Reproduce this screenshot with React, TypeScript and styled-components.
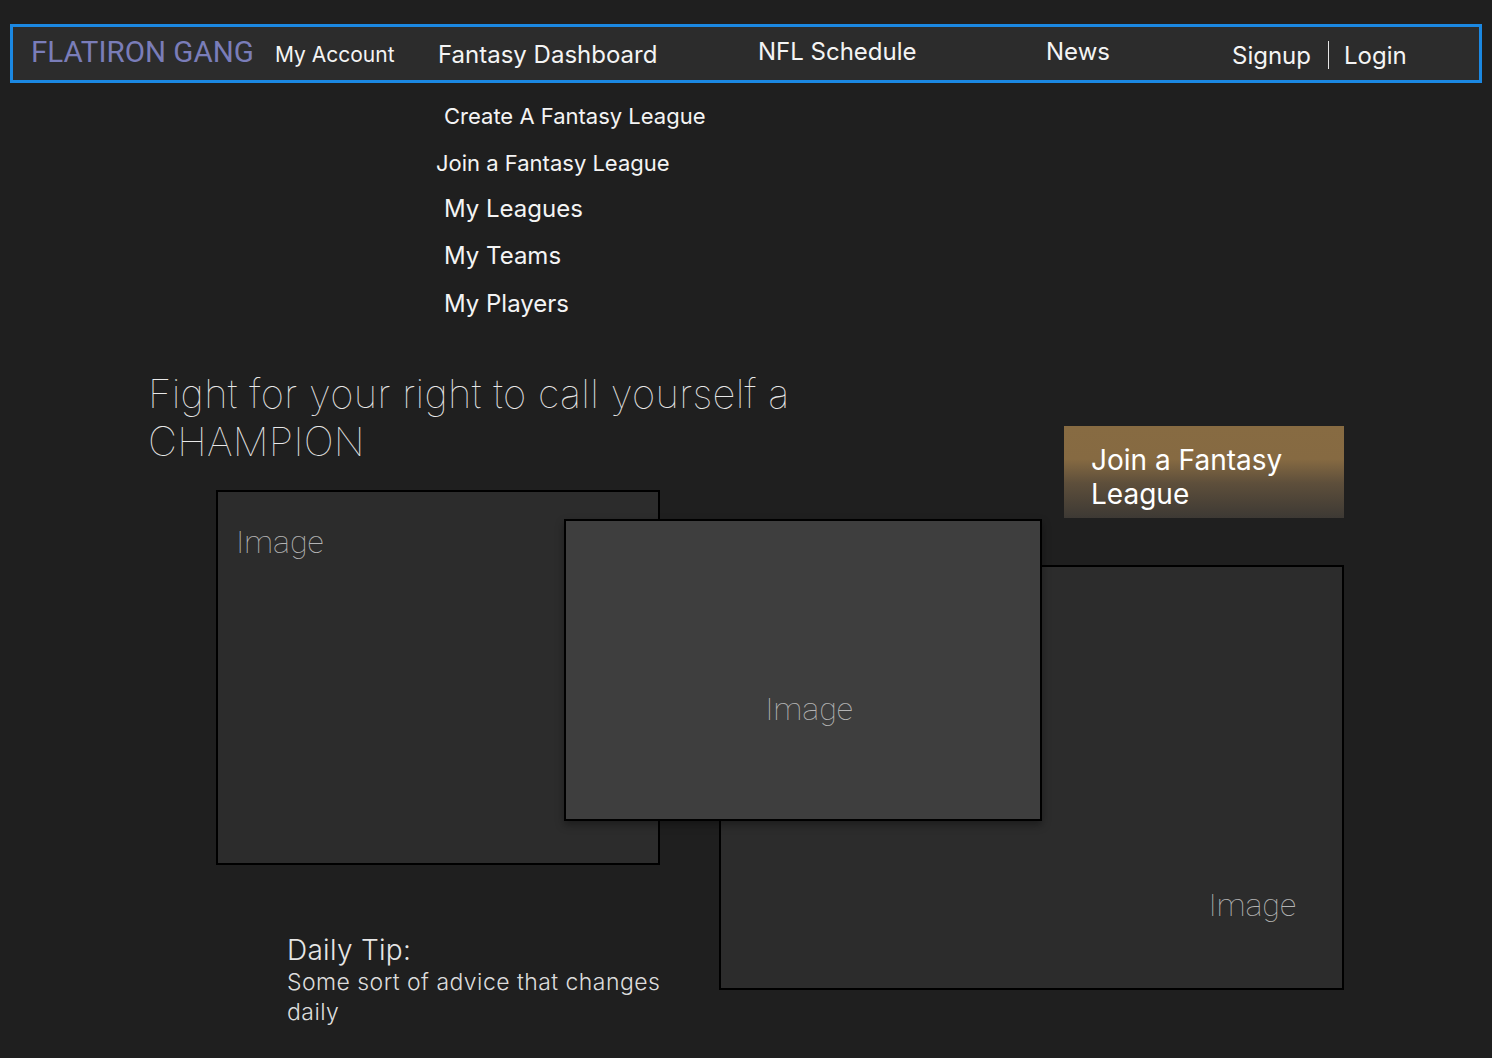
import React from "react";
import styled, { createGlobalStyle } from "styled-components";

const Global = createGlobalStyle`
  html, body { margin: 0; padding: 0; background: #1f1f1f; }
  body { font-family: Inter, "Noto Sans", sans-serif; color: #f2f2f2; width: 1492px; min-height: 1058px; overflow: hidden; }
  * { box-sizing: border-box; }
`;

const Page = styled.div`
  width: 1492px;
  height: 1058px;
  padding-top: 24px;
`;

const NavBar = styled.nav`
  margin: 0 10px;
  height: 59px;
  border: 3px solid #1b88e2;
  background: #2c2c2c;
  display: flex;
  align-items: flex-start;
`;

const Brand = styled.div`
  width: 262px;
  padding: 9.5px 0 0 18px;
  font-family: Roboto, "Liberation Sans", sans-serif;
  font-size: 29.5px;
  line-height: 30px;
  font-weight: 400;
  color: #7a7db9;
  white-space: nowrap;
`;

const NavItem = styled.a<{ $w?: number; $top: number; $size: number }>`
  ${(p) => (p.$w ? `width: ${p.$w}px;` : "")}
  padding-top: ${(p) => p.$top}px;
  font-size: ${(p) => p.$size}px;
  line-height: 30px;
  color: #f4f4f4;
  white-space: nowrap;
  text-decoration: none;
`;

const Divider = styled.span`
  margin: 14px 15px 0 17px;
  width: 0;
  height: 28px;
  border-left: 1.5px solid #e6e6e6;
`;

const Menu = styled.ul`
  list-style: none;
  margin: 9.5px 0 0 0;
  padding: 0;
  display: flex;
  flex-direction: column;
`;

const MenuItem = styled.li<{ $indent: number; $h: number; $size: number }>`
  padding-left: ${(p) => p.$indent}px;
  height: ${(p) => p.$h}px;
  line-height: ${(p) => p.$h}px;
  font-size: ${(p) => p.$size}px;
  color: #f4f4f4;
  white-space: nowrap;
`;

const Stage = styled.section`
  position: relative;
  margin-top: 42px;
  display: flex;
  align-items: flex-start;
`;

const LeftCol = styled.div`
  flex: 0 0 719px;
  min-width: 0;
  display: flex;
  flex-direction: column;
`;

const RightCol = styled.div`
  flex: 0 0 625px;
  min-width: 0;
  display: flex;
  flex-direction: column;
`;

const Headline = styled.h1`
  margin: 0 0 0 148px;
  width: 680px;
  flex-shrink: 0;
  font-size: 40px;
  line-height: 48px;
  font-weight: 100;
  color: #e8e8e8;
  letter-spacing: 0.3px;
`;

const CtaButton = styled.button`
  margin: 56.5px 0 0 345px;
  width: 280px;
  height: 92px;
  border: none;
  padding: 16.5px 0 0 27px;
  text-align: left;
  align-self: flex-start;
  background: linear-gradient(180deg, #876b42 0%, #866a42 36%, #5e4f3b 62%, #3d3934 100%);
  font-family: Inter, sans-serif;
  font-size: 28px;
  line-height: 34px;
  font-weight: 400;
  color: #ffffff;
  display: flex;
  flex-direction: column;
  cursor: pointer;
`;

const Card = styled.div<{ $w: number; $h: number; $tone: "dark" | "light"; $align: "start" | "center" | "end" }>`
  width: ${(p) => p.$w}px;
  height: ${(p) => p.$h}px;
  flex-shrink: 0;
  border: 2px solid #000;
  background: ${(p) => (p.$tone === "light" ? "#3e3e3e" : "#2c2c2c")};
  display: flex;
  justify-content: ${(p) => (p.$align === "start" ? "flex-start" : p.$align === "end" ? "flex-end" : "center")};
  align-items: flex-start;
`;

const CardOne = styled(Card)`
  margin: 24.5px 0 0 216px;
  padding: 30px 0 0 18px;
`;

const CardThree = styled(Card)`
  margin-top: 47px;
  padding: 317.5px 46px 0 0;
`;

const FloatingCard = styled(Card)`
  position: absolute;
  left: 564px;
  top: 149.5px;
  padding: 168px 0 0 12px;
  box-shadow: 0 4px 8px rgba(0, 0, 0, 0.35);
  z-index: 2;
`;

const CardLabel = styled.span`
  font-family: Roboto, "Liberation Sans", sans-serif;
  font-weight: 100;
  font-size: 32px;
  line-height: 40px;
  color: #b4b4b4;
`;

const Tip = styled.div`
  margin: 67.5px 0 0 287px;
  width: 400px;
  display: flex;
  flex-direction: column;
`;

const TipTitle = styled.h3`
  margin: 0;
  font-size: 28px;
  line-height: 34px;
  font-weight: 300;
  color: #e6e6e6;
  letter-spacing: 0.3px;
`;

const TipText = styled.p`
  margin: 0;
  font-size: 23px;
  line-height: 30px;
  font-weight: 300;
  color: #dcdcdc;
  letter-spacing: 0.45px;
`;

export default function App() {
  return (
    <Page>
      <Global />
      <NavBar>
        <Brand>FLATIRON GANG</Brand>
        <NavItem $w={163} $top={12.5} $size={21}>My Account</NavItem>
        <NavItem $w={320} $top={13} $size={24}>Fantasy Dashboard</NavItem>
        <NavItem $w={288} $top={10} $size={24}>NFL Schedule</NavItem>
        <NavItem $w={186} $top={10} $size={24}>News</NavItem>
        <NavItem $top={13.5} $size={24}>Signup</NavItem>
        <Divider />
        <NavItem $top={13.5} $size={24}>Login</NavItem>
      </NavBar>

      <Menu>
        <MenuItem $indent={444} $h={47} $size={22}>Create A Fantasy League</MenuItem>
        <MenuItem $indent={436} $h={46} $size={22}>Join a Fantasy League</MenuItem>
        <MenuItem $indent={444} $h={46} $size={24}>My Leagues</MenuItem>
        <MenuItem $indent={444} $h={48} $size={24}>My Teams</MenuItem>
        <MenuItem $indent={444} $h={48} $size={24}>My Players</MenuItem>
      </Menu>

      <Stage>
        <LeftCol>
          <Headline>Fight for your right to call yourself a CHAMPION</Headline>
          <CardOne $w={444} $h={375} $tone="dark" $align="start">
            <CardLabel>Image</CardLabel>
          </CardOne>
          <Tip>
            <TipTitle>Daily Tip:</TipTitle>
            <TipText>Some sort of advice that changes daily</TipText>
          </Tip>
        </LeftCol>
        <RightCol>
          <CtaButton>
            <span>Join a Fantasy</span>
            <span>League</span>
          </CtaButton>
          <CardThree $w={625} $h={425} $tone="dark" $align="end">
            <CardLabel>Image</CardLabel>
          </CardThree>
        </RightCol>
        <FloatingCard $w={478} $h={302} $tone="light" $align="center">
          <CardLabel>Image</CardLabel>
        </FloatingCard>
      </Stage>
    </Page>
  );
}
